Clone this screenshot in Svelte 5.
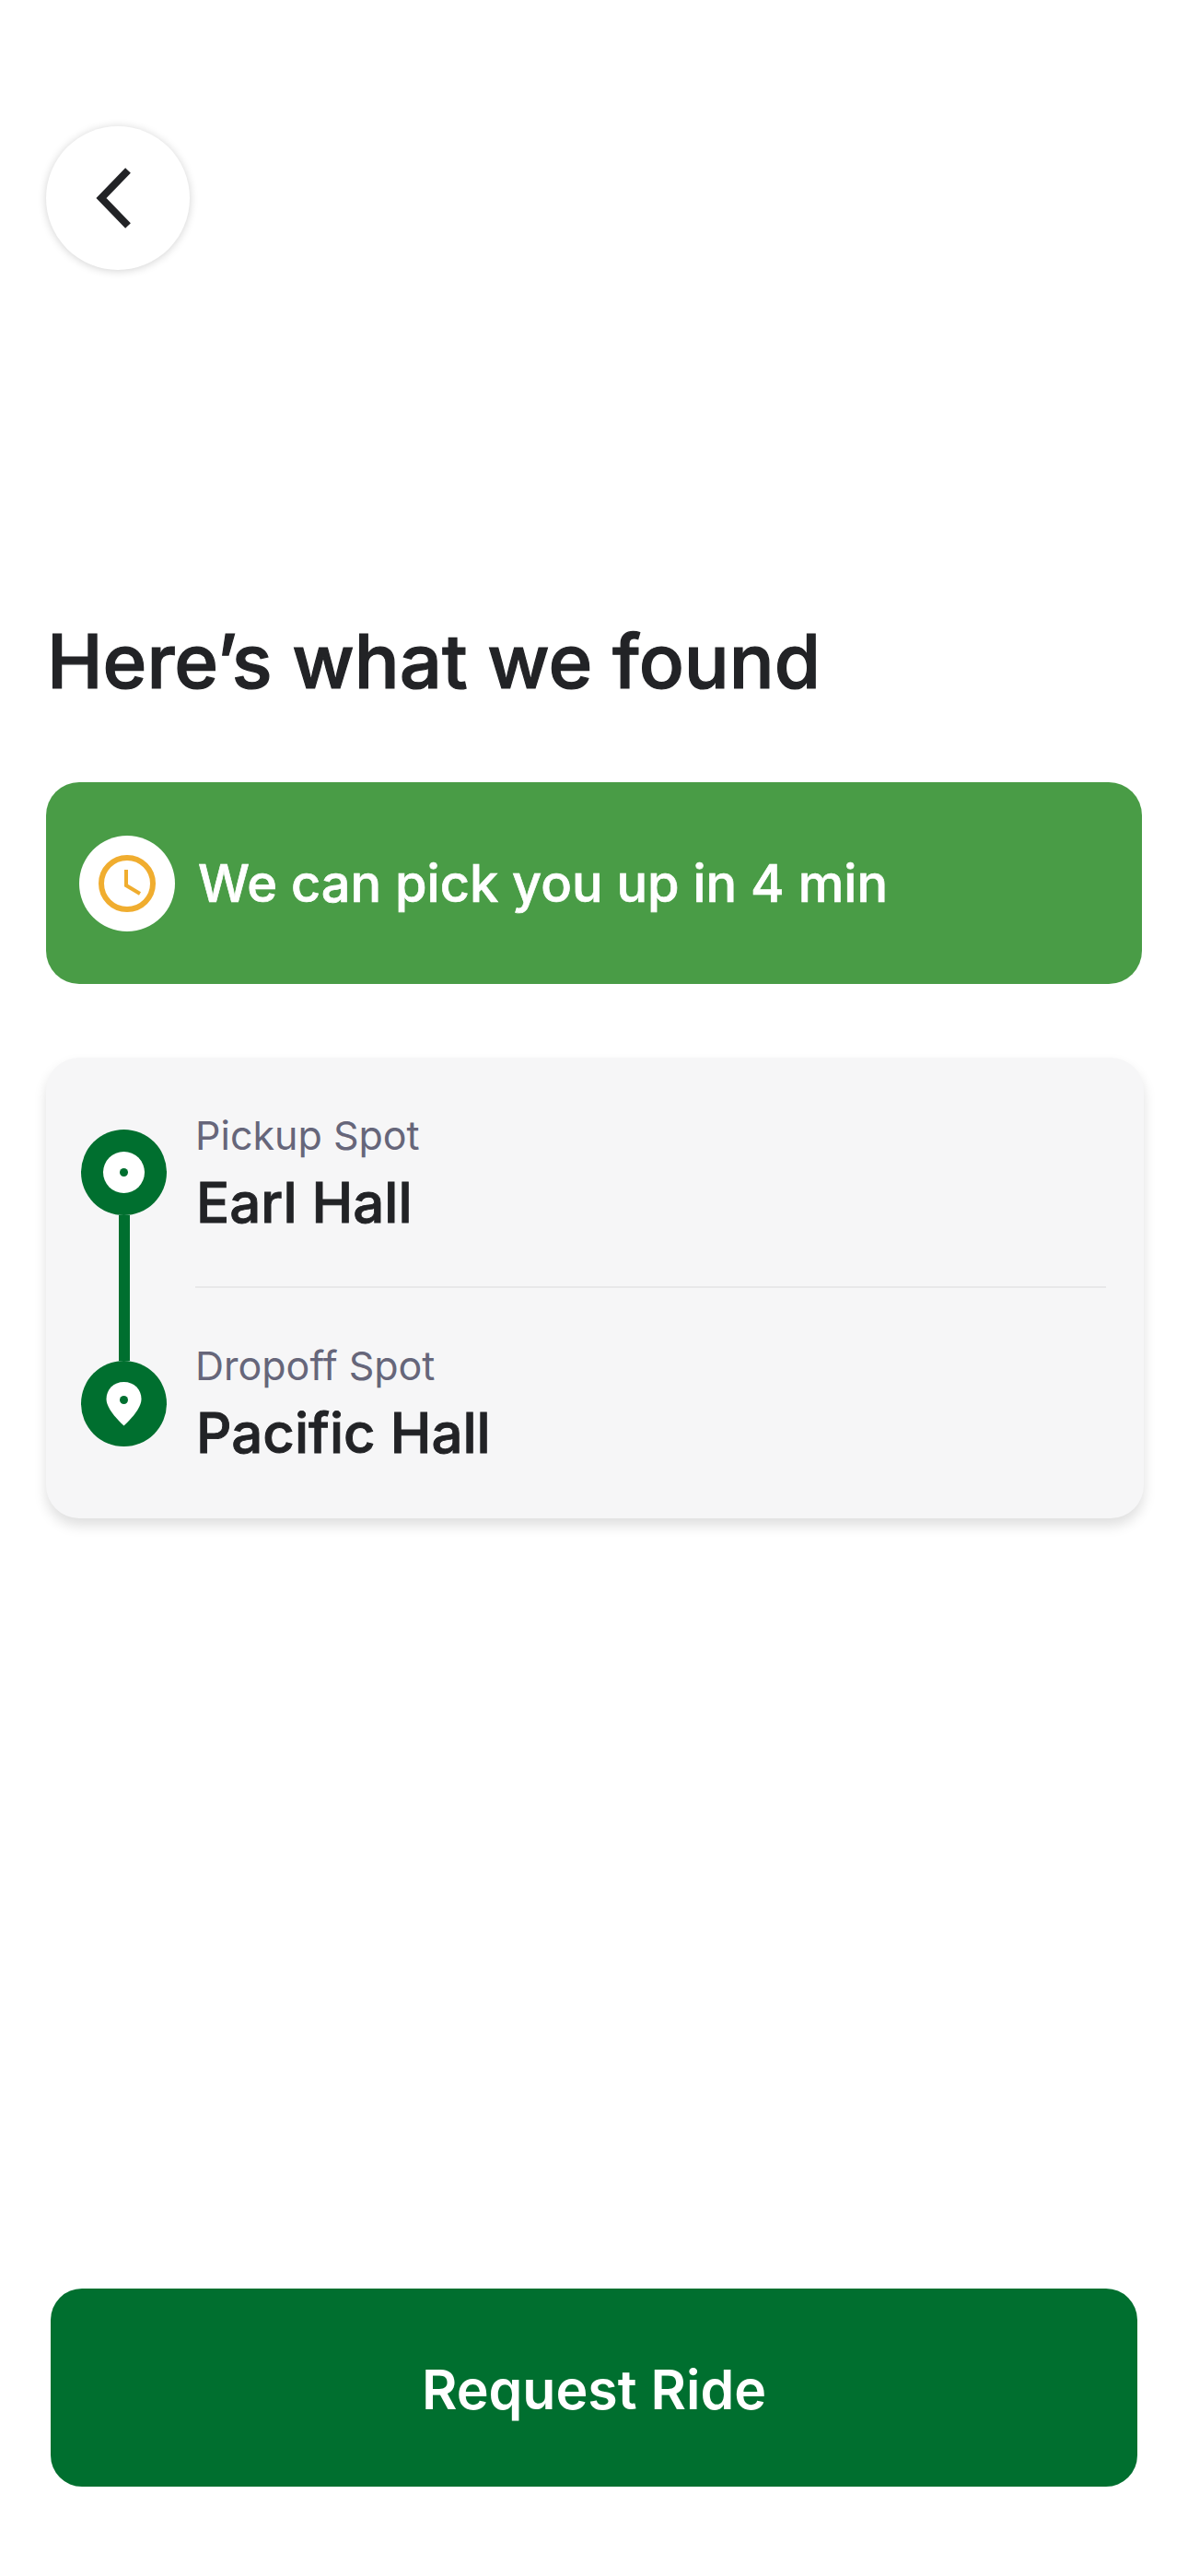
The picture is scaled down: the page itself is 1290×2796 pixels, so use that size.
<script>
  let stops = [
    { label: 'Pickup Spot', name: 'Earl Hall' },
    { label: 'Dropoff Spot', name: 'Pacific Hall' }
  ];
</script>

<main class="page">
  <button class="back" aria-label="Back">
    <svg width="48" height="72" viewBox="0 0 48 72">
      <path d="M35 6 L6 36 L35 66" fill="none" stroke="#222326" stroke-width="8" />
    </svg>
  </button>

  <h1>Here’s what we found</h1>

  <div class="eta">
    <span class="eta-icon">
      <svg width="62" height="62" viewBox="0 0 62 62">
        <circle cx="31" cy="31" r="28" fill="none" stroke="#f0ad2f" stroke-width="6" />
        <path d="M30 16 V33 L45 42" fill="none" stroke="#f0ad2f" stroke-width="4" />
      </svg>
    </span>
    <span>We can pick you up in 4 min</span>
  </div>

  <section class="route">
    <div class="rail">
      <span class="node">
        <svg width="93" height="93" viewBox="0 0 93 93">
          <circle cx="46.5" cy="46.5" r="46.5" fill="#006f2f" />
          <circle cx="46.5" cy="46.5" r="22.5" fill="#fff" />
          <circle cx="46.5" cy="46.5" r="4.5" fill="#006f2f" />
        </svg>
      </span>
      <span class="line"></span>
      <span class="node">
        <svg width="93" height="93" viewBox="0 0 93 93">
          <circle cx="46.5" cy="46.5" r="46.5" fill="#006f2f" />
          <path d="M46.5 23 C35.5 23 27.5 31 27.5 41.5 C27.5 51 38 62.5 46.5 70.5 C55 62.5 65.5 51 65.5 41.5 C65.5 31 57.5 23 46.5 23 Z" fill="#fff" />
          <circle cx="46.5" cy="42.5" r="4.5" fill="#006f2f" />
        </svg>
      </span>
    </div>
    <div class="stops">
      {#each stops as stop}
        <div class="stop">
          <span class="label">{stop.label}</span>
          <span class="name">{stop.name}</span>
        </div>
      {/each}
    </div>
  </section>

  <button class="request">Request Ride</button>
</main>

<style>
  :global(body) {
    background: #fff;
  }

  .page {
    box-sizing: border-box;
    height: 2796px;
    padding: 137px 50px 97px;
    display: flex;
    flex-direction: column;
    font-family: Inter, "Liberation Sans", sans-serif;
    color: #222326;
  }

  button {
    font: inherit;
    border: none;
    cursor: pointer;
  }

  .back {
    width: 156px;
    height: 156px;
    padding: 0;
    border-radius: 50%;
    background: #fff;
    box-shadow: 0 1px 10px rgba(0, 0, 0, 0.18);
    display: flex;
    align-items: center;
    justify-content: center;
    flex-shrink: 0;
  }

  h1 {
    margin: 375px 0 0 1px;
    font-size: 81.4px;
    line-height: 100px;
    font-weight: 500;
    -webkit-text-stroke: 1.2px currentColor;
  }

  .eta {
    margin-top: 81px;
    height: 219px;
    border-radius: 36px;
    background: #499c46;
    color: #fff;
    display: flex;
    align-items: center;
    gap: 25px;
    padding-left: 36px;
    font-size: 55.9px;
    font-weight: 500;
    -webkit-text-stroke: 0.7px currentColor;
    flex-shrink: 0;
  }

  .eta-icon {
    width: 104px;
    height: 104px;
    border-radius: 50%;
    background: #fff;
    display: flex;
    align-items: center;
    justify-content: center;
  }

  .route {
    margin-top: 80px;
    width: 1192px;
    height: 500px;
    box-sizing: border-box;
    padding: 78px 41px 78px 38px;
    border-radius: 36px;
    background: #f6f6f7;
    box-shadow: 0 8px 14px rgba(0, 0, 0, 0.13);
    display: flex;
    gap: 31px;
    flex-shrink: 0;
  }

  .rail {
    width: 93px;
    display: flex;
    flex-direction: column;
    align-items: center;
  }

  .node {
    display: block;
    height: 93px;
  }

  .line {
    flex: 1;
    width: 12px;
    background: #006f2f;
  }

  .stops {
    flex: 1;
    display: flex;
    flex-direction: column;
    margin-top: -62px;
  }

  .stop {
    box-sizing: border-box;
    display: flex;
    flex-direction: column;
    flex-shrink: 0;
  }

  .stop:first-child {
    padding: 43px 0 57px;
    border-bottom: 2px solid #e8e8e9;
  }

  .stop + .stop {
    padding-top: 59px;
  }

  .label {
    font-size: 43px;
    line-height: 50px;
    color: #66667a;
  }

  .name {
    margin: 14px 0 0 1px;
    font-size: 60px;
    line-height: 68px;
    font-weight: 500;
    -webkit-text-stroke: 0.9px currentColor;
  }

  .request {
    margin: auto 5px 0;
    height: 215px;
    padding-top: 4px;
    border-radius: 34px;
    background: #006f2f;
    color: #fff;
    font-size: 59px;
    font-weight: 600;
    flex-shrink: 0;
  }
</style>
